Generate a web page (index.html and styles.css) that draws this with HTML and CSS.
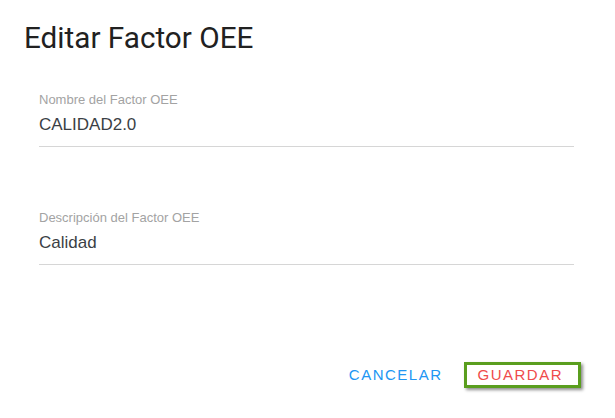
FILE: index.html
```html
<!DOCTYPE html>
<html lang="es">
<head>
<meta charset="utf-8">
<title>Editar Factor OEE</title>
<link rel="stylesheet" href="styles.css">
</head>
<body>
<div class="dialog">
  <h1 class="dialog-title">Editar Factor OEE</h1>
  <div class="dialog-content">
    <div class="field">
      <label class="field-label">Nombre del Factor OEE</label>
      <div class="field-value">CALIDAD2.0</div>
    </div>
    <div class="field field-second">
      <label class="field-label">Descripción del Factor OEE</label>
      <div class="field-value">Calidad</div>
    </div>
  </div>
  <div class="dialog-actions">
    <button class="btn btn-cancel" type="button">CANCELAR</button>
    <button class="btn btn-save" type="button">GUARDAR</button>
  </div>
</div>
</body>
</html>
```

FILE: styles.css
```css
html, body {
  margin: 0;
  padding: 0;
  background: #ffffff;
}

.dialog {
  width: 615px;
  height: 418px;
  box-sizing: border-box;
  padding-top: 20px;
  display: flex;
  flex-direction: column;
}

.dialog-title {
  margin: 0 0 0 24px;
  font-family: Roboto, "Liberation Sans", sans-serif;
  font-weight: 400;
  font-size: 29.7px;
  line-height: 36px;
  color: #212121;
}

.dialog-content {
  padding: 0 41px 0 39px;
  margin-top: 36px;
  display: flex;
  flex-direction: column;
}

.field {
  display: flex;
  flex-direction: column;
  border-bottom: 1px solid #d6d6d6;
  padding-bottom: 11px;
}

.field-second {
  margin-top: 63px;
}

.field-label {
  font-family: "Liberation Sans", Arial, sans-serif;
  font-size: 13px;
  line-height: 15px;
  color: #a3a3a3;
}

.field-value {
  margin-top: 8px;
  font-family: "Liberation Sans", Arial, sans-serif;
  font-size: 17px;
  line-height: 20px;
  color: #3b3f45;
}

.dialog-actions {
  margin-top: 97px;
  padding-right: 34px;
  display: flex;
  justify-content: flex-end;
  align-items: center;
  gap: 22px;
}

.btn {
  background: transparent;
  border: 0;
  margin: 0;
  padding: 0;
  font-family: "Liberation Sans", Arial, sans-serif;
  font-size: 15px;
  line-height: 20px;
  letter-spacing: 1.5px;
  cursor: pointer;
}

.btn-cancel {
  color: #2196f3;
}

.btn-save {
  color: #ef4b4b;
  border: 3px solid #5a9e1e;
  padding: 0 15px 0 10px;
  box-shadow: 2px 2px 3px rgba(0, 0, 0, 0.45);
}
```
